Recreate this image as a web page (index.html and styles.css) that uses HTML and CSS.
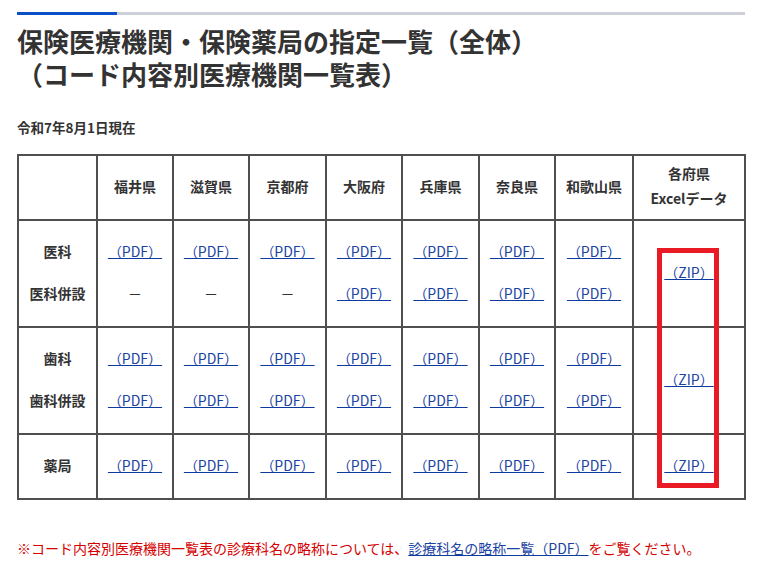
FILE: index.html
```html
<!DOCTYPE html>
<html lang="ja">
<head>
<meta charset="utf-8">
<title>保険医療機関・保険薬局の指定一覧（全体）</title>
<link rel="stylesheet" href="styles.css">
</head>
<body>
<div class="page">
  <div class="bar"><span class="bar-accent"></span></div>
  <h1 class="title"><span class="title-line">保険医療機関・保険薬局の指定一覧（全体）</span><span class="title-line">（コード内容別医療機関一覧表）</span></h1>
  <p class="date">令和7年8月1日現在</p>
  <div class="table-wrap">
    <table class="list">
      <colgroup>
        <col class="c-head"><col class="c-pref"><col class="c-pref"><col class="c-pref2"><col class="c-pref"><col class="c-pref2"><col class="c-pref"><col class="c-pref3"><col class="c-zip">
      </colgroup>
      <thead>
        <tr class="r-head">
          <th></th>
          <th>福井県</th>
          <th>滋賀県</th>
          <th>京都府</th>
          <th>大阪府</th>
          <th>兵庫県</th>
          <th>奈良県</th>
          <th>和歌山県</th>
          <th>各府県<br>Excelデータ</th>
        </tr>
      </thead>
      <tbody>
        <tr class="r-double">
          <th><div class="stack"><span>医科</span><span>医科併設</span></div></th>
          <td><div class="stack"><a href="#">（PDF）</a><span>－</span></div></td>
          <td><div class="stack"><a href="#">（PDF）</a><span>－</span></div></td>
          <td><div class="stack"><a href="#">（PDF）</a><span>－</span></div></td>
          <td><div class="stack"><a href="#">（PDF）</a><a href="#">（PDF）</a></div></td>
          <td><div class="stack"><a href="#">（PDF）</a><a href="#">（PDF）</a></div></td>
          <td><div class="stack"><a href="#">（PDF）</a><a href="#">（PDF）</a></div></td>
          <td><div class="stack"><a href="#">（PDF）</a><a href="#">（PDF）</a></div></td>
          <td><a href="#">（ZIP）</a></td>
        </tr>
        <tr class="r-double">
          <th><div class="stack"><span>歯科</span><span>歯科併設</span></div></th>
          <td><div class="stack"><a href="#">（PDF）</a><a href="#">（PDF）</a></div></td>
          <td><div class="stack"><a href="#">（PDF）</a><a href="#">（PDF）</a></div></td>
          <td><div class="stack"><a href="#">（PDF）</a><a href="#">（PDF）</a></div></td>
          <td><div class="stack"><a href="#">（PDF）</a><a href="#">（PDF）</a></div></td>
          <td><div class="stack"><a href="#">（PDF）</a><a href="#">（PDF）</a></div></td>
          <td><div class="stack"><a href="#">（PDF）</a><a href="#">（PDF）</a></div></td>
          <td><div class="stack"><a href="#">（PDF）</a><a href="#">（PDF）</a></div></td>
          <td><a href="#">（ZIP）</a></td>
        </tr>
        <tr class="r-single">
          <th>薬局</th>
          <td><a href="#">（PDF）</a></td>
          <td><a href="#">（PDF）</a></td>
          <td><a href="#">（PDF）</a></td>
          <td><a href="#">（PDF）</a></td>
          <td><a href="#">（PDF）</a></td>
          <td><a href="#">（PDF）</a></td>
          <td><a href="#">（PDF）</a></td>
          <td><a href="#">（ZIP）</a></td>
        </tr>
      </tbody>
    </table>
    <div class="highlight"></div>
  </div>
  <p class="note">※コード内容別医療機関一覧表の診療科名の略称については、<a href="#">診療科名の略称一覧（PDF）</a>をご覧ください。</p>
</div>
</body>
</html>
```

FILE: styles.css
```css
html, body {
  margin: 0;
  padding: 0;
  background: #ffffff;
}

body {
  font-family: "Noto Sans CJK JP", "Noto Sans", sans-serif;
  color: #333333;
  font-size: 14px;
}

.page {
  padding: 12px 18px 0 17px;
}

.bar {
  height: 3px;
  background: #cdd0d8;
  display: flex;
}

.bar-accent {
  width: 100px;
  background: #0b50c6;
}

.title {
  margin: 13px 0 0;
  display: flex;
  flex-direction: column;
  gap: 7px;
  font-size: 26px;
  line-height: 26px;
  font-weight: 700;
  color: #333333;
}

.title-line {
  display: block;
}

.date {
  margin: 30px 0 0;
  font-size: 13.5px;
  line-height: 20px;
  font-weight: 700;
}

.table-wrap {
  position: relative;
  margin-top: 17px;
  width: 729px;
}

.list {
  border-collapse: collapse;
  table-layout: fixed;
  width: 729px;
}

.c-head { width: 79px; }
.c-pref { width: 76px; }
.c-pref2 { width: 77px; }
.c-pref3 { width: 78px; }
.c-zip { width: 112px; }

.list th,
.list td {
  border: 2px solid #4f4f4f;
  padding: 0 0 3px;
  text-align: center;
  vertical-align: middle;
  font-size: 14px;
  line-height: 24px;
}

.list th {
  font-weight: 700;
  color: #333333;
}

.list td {
  color: #333333;
}

.r-head th {
  height: 60px;
  line-height: 25px;
}

.r-double th,
.r-double td {
  height: 102px;
}

.r-single th,
.r-single td {
  height: 60px;
}

.stack {
  display: flex;
  flex-direction: column;
  align-items: center;
  gap: 18px;
}

.list a,
.note a {
  color: #1a43a4;
  text-decoration: underline;
  text-decoration-color: #0d3a9e;
}

.highlight {
  position: absolute;
  left: 640px;
  top: 94px;
  width: 52px;
  height: 230px;
  border: 5px solid #e81b24;
}

.note {
  margin: 38px 0 0;
  font-size: 14px;
  line-height: 20px;
  color: #d40000;
}
```
